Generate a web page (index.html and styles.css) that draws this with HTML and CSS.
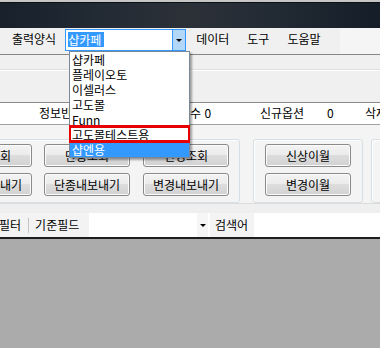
FILE: index.html
```html
<!DOCTYPE html>
<html lang="ko">
  <head>
    <meta charset="UTF-8" />
    <meta name="viewport" content="width=device-width, initial-scale=1.0" />
    <title>상품관리</title>
    <link rel="stylesheet" href="styles.css">
  </head>

  <body>
    <div class="app">
      <!-- 창 제목줄 (aero) -->
      <div class="titlebar"></div>

      <!-- 메뉴 -->
      <div class="menubar">
        <span class="menu-label">출력양식</span>
        <div class="combo">
          <span class="combo-value">샵카페</span>
          <span class="combo-button"><span class="arrow"></span></span>
        </div>
        <span class="menu-item menu-data">데이터</span>
        <span class="menu-item menu-tool">도구</span>
        <span class="menu-item menu-help">도움말</span>
      </div>

      <div class="toolstrip">
        <div class="toolstrip-top"></div>
        <div class="toolstrip-body"></div>
      </div>

      <!-- 집계 -->
      <div class="info-row">
        <span class="stat stat-total">정보반영 대상 상품</span>
        <span class="stat stat-count">수 0</span>
        <span class="stat stat-new">신규옵션</span>
        <span class="stat stat-zero">0</span>
        <span class="stat">삭제옵션</span>
      </div>

      <!-- 버튼 그룹 -->
      <div class="button-panel">
        <div class="group group-first">
          <button class="btn">상품조회</button>
          <button class="btn">단종조회</button>
          <button class="btn">변경조회</button>
          <button class="btn">상품내보내기</button>
          <button class="btn">단종내보내기</button>
          <button class="btn">변경내보내기</button>
        </div>
        <div class="group group-move">
          <button class="btn">신상이월</button>
          <button class="btn">변경이월</button>
        </div>
        <div class="group group-last"></div>
      </div>

      <div class="panel-foot"></div>

      <!-- 검색 -->
      <div class="searchbar">
        <div class="search-seg search-filter">
          <span class="search-text filter-text">필터</span>
          <span class="search-sep"></span>
          <span class="search-text">기준필드</span>
        </div>
        <div class="search-field"></div>
        <div class="search-drop"><span class="arrow"></span></div>
        <div class="search-seg search-word">
          <span class="search-text">검색어</span>
        </div>
      </div>

      <div class="desktop"></div>

      <!-- 펼쳐진 출력양식 목록 -->
      <ul class="dropdown">
        <li>샵카페</li>
        <li>플레이오토</li>
        <li>이셀러스</li>
        <li>고도몰</li>
        <li>Funn</li>
        <li>고도몰테스트용</li>
        <li class="selected">샵엔용</li>
      </ul>
      <div class="mark"></div>
    </div>
  </body>
</html>
```

FILE: styles.css
```css
body {
  margin: 0;
  background-color: #ababab;
  font-family: "Noto Sans CJK KR", "Noto Sans", sans-serif;
  font-size: 12px;
  color: #000;
  overflow: hidden;
}

.app {
  position: relative;
  width: 380px;
  height: 348px;
  overflow: hidden;
}

.titlebar {
  height: 28px;
  background:
    linear-gradient(to bottom, #c6c6c6 0, #c6c6c6 2px, #0c1015 2px, #0c1015 3px, transparent 3px),
    linear-gradient(to right, #18202c, #222a34 25%, #2c3138 50%, #232b35 70%, #151d28);
}

.menubar {
  display: flex;
  align-items: flex-start;
  height: 25px;
  padding-top: 1px;
  background: linear-gradient(to right, #f0f0f0 340px, #f5f5f5 340px);
}

.menu-label,
.menu-item {
  line-height: 20px;
  white-space: nowrap;
}

.menu-label {
  margin-left: 12px;
}

.combo {
  display: flex;
  box-sizing: border-box;
  width: 121px;
  height: 22px;
  margin-left: 9px;
  border: 1px solid #3399ff;
  background-color: #fff;
}

/* 선택된 글자만 파랗게 */
.combo-value {
  flex: 1;
  padding: 2px 0 0 2px;
  line-height: 15px;
  color: #fff;
  background: linear-gradient(to right, transparent 2px, #3399ff 2px, #3399ff 38px, transparent 38px) no-repeat;
  background-size: 100% 15px;
  background-position: 0 2px;
}

.combo-button {
  display: flex;
  align-items: center;
  justify-content: center;
  width: 12px;
  border-left: 1px solid #3399ff;
  background-color: #b3d7f7;
}

.arrow {
  width: 0;
  height: 0;
  border-left: 3px solid transparent;
  border-right: 3px solid transparent;
  border-top: 3px solid #000;
}

.menu-data {
  margin-left: 10px;
}

.menu-tool {
  margin-left: 18px;
}

.menu-help {
  margin-left: 18px;
}

.toolstrip-top {
  height: 14px;
  border-top: 1px solid #878787;
  border-bottom: 1px solid #dedede;
  background-color: #f0f0f0;
}

.toolstrip-body {
  height: 31px;
  border-top: 1px solid #fff;
  border-bottom: 1px solid #8a8a8a;
  background-color: #f0f0f0;
}

.info-row {
  display: flex;
  height: 21px;
  line-height: 20px;
  padding-left: 39px;
  border-bottom: 1px solid #a0a0a0;
  background-color: #fff;
  white-space: nowrap;
}

.stat {
  flex: none;
}

.stat-total {
  width: 151px;
  overflow: hidden;
}

.stat-count {
  width: 70px;
}

.stat-new {
  width: 67px;
}

.stat-zero {
  width: 38px;
}

.button-panel {
  display: flex;
  align-items: flex-start;
  height: 64px;
  padding-top: 14px;
  border-bottom: 1px solid #dcdcdc;
  background-color: #f4f4f4;
}

.group {
  box-sizing: border-box;
  height: 64px;
  padding: 4px 11px 0;
  border: 1px solid #d5dfe5;
  border-radius: 3px;
  box-shadow: inset 1px 1px 0 #fff;
}

.group-first {
  display: grid;
  grid-template-columns: repeat(3, 86px);
  column-gap: 12px;
  row-gap: 6px;
  width: 307px;
  margin-left: -66px;
  align-content: start;
}

.group-first .btn:nth-child(3),
.group-first .btn:nth-child(6) {
  margin-left: 1px;
}

.group-move {
  display: flex;
  flex-direction: column;
  gap: 6px;
  width: 110px;
  margin-left: 13px;
}

.group-last {
  width: 60px;
  margin-left: 8px;
}

.btn {
  box-sizing: border-box;
  width: 86px;
  height: 23px;
  padding: 0;
  border: 1px solid #8a8a8a;
  border-radius: 3px;
  background: linear-gradient(to bottom, #f3f3f3 0%, #ececec 45%, #dddddd 50%, #d2d2d2 100%);
  box-shadow: inset 0 0 0 1px #fcfcfc;
  font-family: inherit;
  font-size: 12px;
  line-height: 20px;
  color: #000;
  white-space: nowrap;
}

.panel-foot {
  height: 9px;
  background-color: #efefef;
}

.searchbar {
  display: flex;
  height: 24px;
  border-bottom: 2px solid #1e1e1e;
  background-color: #fff;
}

.search-seg {
  display: flex;
  align-items: center;
  background-color: #f3f3f3;
}

.search-filter {
  width: 89px;
}

.search-text {
  line-height: 20px;
  white-space: nowrap;
}

.filter-text {
  margin-left: -1px;
}

.search-sep {
  width: 1px;
  height: 15px;
  margin: 0 6px 0 7px;
  background-color: #c4c4c4;
}

.search-field {
  width: 108px;
}

.search-drop {
  display: flex;
  align-items: center;
  justify-content: center;
  width: 11px;
  margin-right: 2px;
  background-color: #f6f6f6;
}

.search-word {
  width: 44px;
  padding-left: 5px;
  box-sizing: border-box;
}

.desktop {
  height: 109px;
  background-color: #ababab;
}

.dropdown {
  position: absolute;
  left: 69px;
  top: 51px;
  box-sizing: border-box;
  width: 121px;
  margin: 0;
  padding: 0;
  border: 1px solid #7a8796;
  list-style: none;
  background-color: #fff;
  box-shadow: 2px 2px 2px rgba(0, 0, 0, 0.35);
}

.dropdown li {
  height: 15px;
  padding-left: 2px;
  line-height: 15px;
  white-space: nowrap;
}

.dropdown li.selected {
  background-color: #3399ff;
  color: #fff;
}

.mark {
  position: absolute;
  left: 69px;
  top: 125px;
  box-sizing: border-box;
  width: 121px;
  height: 18px;
  border: 3px solid #e60000;
  border-left-width: 2px;
  border-right-width: 2px;
}
```
